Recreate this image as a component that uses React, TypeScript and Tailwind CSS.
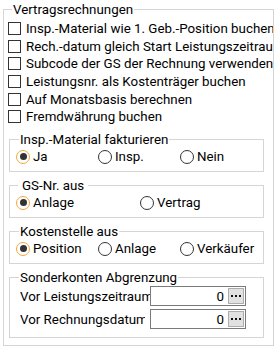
import React from "react";

function Check({ label }: { label: string }) {
  return (
    <div className="flex h-[17.6px] items-center whitespace-nowrap">
      <div className="h-[13px] w-[13px] shrink-0 border border-[#333333] bg-white" />
      <span className="ml-[5px]">{label}</span>
    </div>
  );
}

function Radio({ label, checked }: { label: string; checked?: boolean }) {
  return (
    <div className="flex h-[16px] items-center whitespace-nowrap">
      <div
        className={
          checked
            ? "flex h-[14px] w-[14px] shrink-0 items-center justify-center rounded-full border border-[#f0a83c] bg-white"
            : "flex h-[14px] w-[14px] shrink-0 items-center justify-center rounded-full border border-[#333333] bg-white"
        }
      >
        {checked && <div className="h-[7px] w-[7px] rounded-full bg-[#333333]" />}
      </div>
      <span className="ml-[3px]">{label}</span>
    </div>
  );
}

function Dots() {
  return (
    <div className="flex items-center gap-[2px]">
      <div className="h-[2px] w-[2px] bg-[#111]" />
      <div className="h-[2px] w-[2px] bg-[#111]" />
      <div className="h-[2px] w-[2px] bg-[#111]" />
    </div>
  );
}

function NumField({ label, short }: { label: string; short?: boolean }) {
  return (
    <div className="flex h-[20px] items-center">
      <div
        className={
          short
            ? "mr-[5px] w-[125px] shrink-0 overflow-hidden whitespace-nowrap"
            : "w-[130px] shrink-0 overflow-hidden whitespace-nowrap"
        }
      >
        {label}
      </div>
      <div className="flex h-[20px] w-[96px] items-center justify-end border border-[#7a7a7a] bg-white pr-[1px]">
        <span className="mr-[4px]">0</span>
        <div className="flex h-[16px] w-[16px] items-center justify-center border border-[#adadad] bg-[#e1e1e1]">
          <Dots />
        </div>
      </div>
    </div>
  );
}

export default function App() {
  return (
    <div className="h-[349px] w-[276px] overflow-hidden bg-white font-['Roboto',sans-serif] text-[13.33px] leading-[15px] text-black">
      <fieldset className="ml-[3px] mt-[2px] h-[344px] w-[271px] min-w-0 border border-[#d5d5d5]">
        <legend className="ml-[8px] px-[1px]">Vertragsrechnungen</legend>
        <div className="overflow-hidden pl-[4px] pt-[3px]">
          <Check label="Insp.-Material wie 1. Geb.-Position buchen" />
          <Check label="Rech.-datum gleich Start Leistungszeitraum" />
          <Check label="Subcode der GS der Rechnung verwenden" />
          <Check label="Leistungsnr. als Kostenträger buchen" />
          <Check label="Auf Monatsbasis berechnen" />
          <Check label="Fremdwährung buchen" />
        </div>
        <div className="flex flex-col gap-[6px] pl-[5px] pt-[6px]">
          <fieldset className="w-[255px] min-w-0 border border-[#d5d5d5] pb-[6px] pl-[6px] pt-[2px]">
            <legend className="ml-[3px] px-[1px]">Insp.-Material fakturieren</legend>
            <div className="grid grid-cols-[82px_82px_82px]">
              <Radio label="Ja" checked />
              <Radio label="Insp." />
              <Radio label="Nein" />
            </div>
          </fieldset>
          <fieldset className="w-[255px] min-w-0 border border-[#d5d5d5] pb-[6px] pl-[6px] pt-[2px]">
            <legend className="ml-[2px] px-[4px]">GS-Nr. aus</legend>
            <div className="grid grid-cols-[124px_124px]">
              <Radio label="Anlage" checked />
              <Radio label="Vertrag" />
            </div>
          </fieldset>
          <fieldset className="w-[255px] min-w-0 border border-[#d5d5d5] pb-[6px] pl-[6px] pt-[2px]">
            <legend className="ml-[3px] px-[1px]">Kostenstelle aus</legend>
            <div className="grid grid-cols-[82px_82px_82px]">
              <Radio label="Position" checked />
              <Radio label="Anlage" />
              <Radio label="Verkäufer" />
            </div>
          </fieldset>
          <fieldset className="w-[255px] min-w-0 border border-[#d5d5d5] pb-[8px] pl-[10px] pt-[1.5px]">
            <legend className="ml-[-1px] px-[1px]">Sonderkonten Abgrenzung</legend>
            <div className="flex flex-col gap-[3px]">
              <NumField label="Vor Leistungszeitraum" />
              <NumField label="Vor Rechnungsdatum" short />
            </div>
          </fieldset>
        </div>
      </fieldset>
    </div>
  );
}
